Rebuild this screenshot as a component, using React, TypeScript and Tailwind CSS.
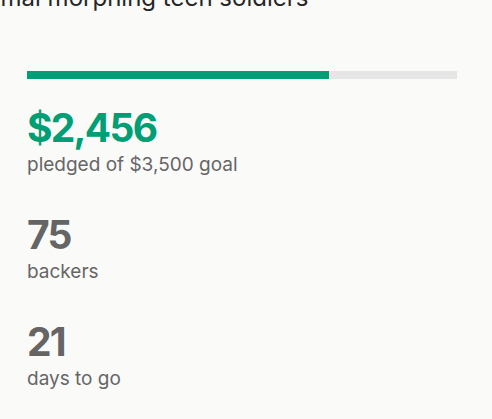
export default function App() {
  const pledged = 2456;
  const goal = 3500;
  const pct = Math.min(100, (pledged / goal) * 100);

  const stats = [
    { value: '$2,456', label: 'pledged of $3,500 goal', accent: true },
    { value: '75', label: 'backers', accent: false },
    { value: '21', label: 'days to go', accent: false },
  ];

  return (
    <div className="min-h-[419px] w-full overflow-hidden bg-[#fafaf9] font-['Inter',sans-serif]">
      {/* Title (scrolled partly off the top) */}
      <h1 className="-mt-[18px] -ml-[36px] whitespace-nowrap text-[24px] font-normal leading-[32px] text-[#262626]">
        Animal morphing teen soldiers
      </h1>

      <div className="pl-[27px] pr-[35px] pt-[57px]">
        {/* Progress */}
        <div className="h-2 w-full bg-[#e6e6e6]">
          <div className="h-2 bg-[#009e74]" style={{ width: `${pct}%` }} />
        </div>

        <div className="mt-[27px] flex flex-col gap-[35px]">
          {stats.map((s) => (
            <div key={s.label}>
              <div
                className={`text-[39px] font-bold leading-[44px] tracking-[-0.045em] ${
                  s.accent ? 'text-[#009e74]' : 'text-[#656565]'
                }`}
              >
                {s.value}
              </div>
              <div className="mt-[2px] text-[19px] leading-[26px] text-[#666666]">{s.label}</div>
            </div>
          ))}
        </div>
      </div>
    </div>
  );
}
